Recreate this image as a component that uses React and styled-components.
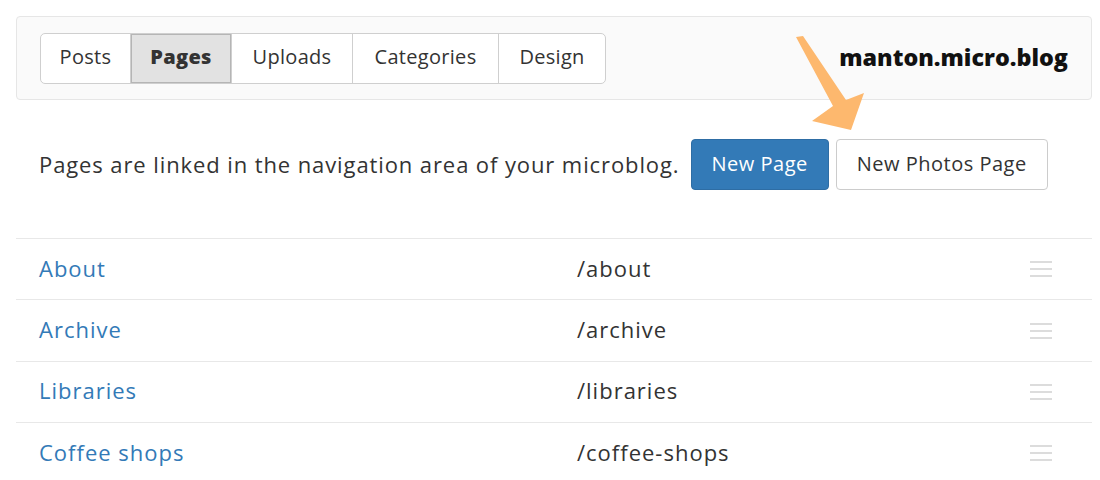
import styled, { createGlobalStyle } from "styled-components";

const GlobalStyle = createGlobalStyle`
  *, *::before, *::after {
    box-sizing: border-box;
  }
  body {
    margin: 0;
    background: #fff;
    font-family: "Open Sans", Lato, sans-serif;
    color: #333;
  }
`;

const Page = styled.div`
  position: relative;
  padding: 16px;
  width: 1108px;
`;

const NavPanel = styled.div`
  display: flex;
  justify-content: space-between;
  align-items: center;
  height: 84px;
  padding: 0 23px;
  background: #fafafa;
  border: 1px solid #e6e6e6;
  border-radius: 4px;
`;

const Tabs = styled.div`
  display: flex;
  border: 1px solid #cfcfcf;
  border-radius: 5px;
  overflow: hidden;
  background: #fff;
`;

const Tab = styled.div`
  width: ${({ w }) => w}px;
  height: 49px;
  display: flex;
  align-items: center;
  justify-content: center;
  padding-bottom: 3px;
  font-size: 20px;
  letter-spacing: 0.3px;
  color: #333;
  border-left: 1px solid #cfcfcf;
  &:first-child {
    border-left: none;
  }
  ${({ active }) =>
    active &&
    `
    background: #e2e2e2;
    font-weight: 800;
    box-shadow: inset 0 0 0 1px #b5b5b5;
  `}
`;

const SiteName = styled.div`
  font-size: 23.3px;
  font-weight: 800;
  color: #111;
  margin-top: -3px;
`;

const Intro = styled.div`
  display: flex;
  align-items: center;
  gap: 11px;
  margin: 39px 0 48px 23px;
`;

const IntroText = styled.span`
  font-size: 22px;
  letter-spacing: 0.9px;
  color: #333;
  padding-bottom: 2px;
`;

const Buttons = styled.div`
  display: flex;
  gap: 7px;
`;

const Button = styled.div`
  height: 51px;
  padding: 0 20px 2px;
  display: flex;
  align-items: center;
  font-size: 20px;
  letter-spacing: 0.5px;
  border-radius: 4px;
  border: 1px solid ${({ primary }) => (primary ? "#2e6da4" : "#cccccc")};
  background: ${({ primary }) => (primary ? "#337ab7" : "#fff")};
  color: ${({ primary }) => (primary ? "#fff" : "#333")};
`;

const Row = styled.div`
  display: grid;
  grid-template-columns: 538px 1fr 62px;
  align-items: center;
  height: 61.4px;
  padding: 0 0 3px 23px;
  border-top: 1px solid #e8e8e8;
`;

const TitleLink = styled.a`
  font-size: 22px;
  letter-spacing: 1px;
  color: #337ab7;
  text-decoration: none;
`;

const PathText = styled.span`
  font-size: 22px;
  letter-spacing: 1px;
  color: #333;
`;

const Handle = styled.div`
  width: 22px;
  display: flex;
  flex-direction: column;
  gap: 5px;
  margin-top: 3px;
  span {
    display: block;
    height: 2px;
    background: #dcdcdc;
  }
`;

const ArrowSvg = styled.svg`
  position: absolute;
  left: 790px;
  top: 30px;
  pointer-events: none;
`;

const pages = [
  { title: "About", path: "/about" },
  { title: "Archive", path: "/archive" },
  { title: "Libraries", path: "/libraries" },
  { title: "Coffee shops", path: "/coffee-shops" },
];

const tabs = [
  { label: "Posts", w: 89 },
  { label: "Pages", w: 101, active: true },
  { label: "Uploads", w: 121 },
  { label: "Categories", w: 146 },
  { label: "Design", w: 107 },
];

export default function App() {
  return (
    <Page>
      <GlobalStyle />
      <NavPanel>
        <Tabs>
          {tabs.map((t) => (
            <Tab key={t.label} w={t.w} active={t.active}>
              {t.label}
            </Tab>
          ))}
        </Tabs>
        <SiteName>manton.micro.blog</SiteName>
      </NavPanel>

      <Intro>
        <IntroText>Pages are linked in the navigation area of your microblog.</IntroText>
        <Buttons>
          <Button primary>New Page</Button>
          <Button>New Photos Page</Button>
        </Buttons>
      </Intro>

      <div>
        {pages.map((p) => (
          <Row key={p.path}>
            <TitleLink>{p.title}</TitleLink>
            <PathText>{p.path}</PathText>
            <Handle>
              <span />
              <span />
              <span />
            </Handle>
          </Row>
        ))}
      </div>

      <ArrowSvg width="90" height="110" viewBox="0 0 90 110">
        <polygon
          points="6,7 13,6 56,70 74,63 61,100 22,91 43,76"
          fill="#fdb86e"
        />
      </ArrowSvg>
    </Page>
  );
}
